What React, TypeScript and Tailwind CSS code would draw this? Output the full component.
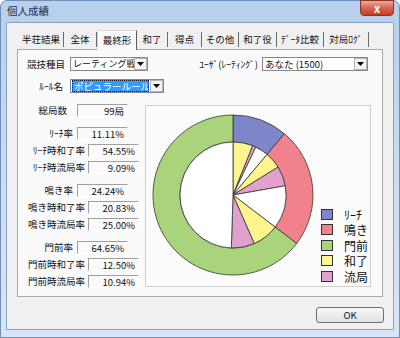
import React from "react";

const FONT = "font-['Noto_Sans_CJK_JP','Noto_Sans',sans-serif]";

const C = {
  blue: "#7d86c8",
  red: "#f1828c",
  green: "#a9d47b",
  yellow: "#fff58e",
  pink: "#e0a2cc",
};

function pt(cx: number, cy: number, r: number, a: number) {
  const t = (a * Math.PI) / 180;
  return [cx + r * Math.sin(t), cy - r * Math.cos(t)];
}

function sector(cx: number, cy: number, r0: number, r1: number, a0: number, a1: number) {
  const large = a1 - a0 > 180 ? 1 : 0;
  const [x1, y1] = pt(cx, cy, r1, a0);
  const [x2, y2] = pt(cx, cy, r1, a1);
  if (r0 === 0) {
    return `M${cx} ${cy} L${x1} ${y1} A${r1} ${r1} 0 ${large} 1 ${x2} ${y2} Z`;
  }
  const [x3, y3] = pt(cx, cy, r0, a1);
  const [x4, y4] = pt(cx, cy, r0, a0);
  return `M${x1} ${y1} A${r1} ${r1} 0 ${large} 1 ${x2} ${y2} L${x3} ${y3} A${r0} ${r0} 0 ${large} 0 ${x4} ${y4} Z`;
}

// outer share, 和了 ratio, 流局 ratio
const groups = [
  { color: C.blue, share: 11.11, win: 54.55, draw: 9.09 },
  { color: C.red, share: 24.24, win: 20.83, draw: 25.0 },
  { color: C.green, share: 64.65, win: 12.5, draw: 10.94 },
];

function Donut() {
  const cx = 87;
  const cy = 89;
  const outer: { d: string; fill: string }[] = [];
  const inner: { d: string; fill: string }[] = [];
  let a = 0;
  groups.forEach((g, i) => {
    const span = i === groups.length - 1 ? 360 - a : g.share * 3.6;
    const end = a + span;
    outer.push({ d: sector(cx, cy, 53, 80, a, end), fill: g.color });
    const w = (span * g.win) / 100;
    const dr = (span * g.draw) / 100;
    inner.push({ d: sector(cx, cy, 0, 53, a, a + w), fill: C.yellow });
    inner.push({ d: sector(cx, cy, 0, 53, a + w, a + w + dr), fill: C.pink });
    inner.push({ d: sector(cx, cy, 0, 53, a + w + dr, end), fill: "#ffffff" });
    a = end;
  });
  return (
    <svg width="168" height="180" viewBox="0 0 168 180" className="shrink-0">
      {outer.map((s, i) => (
        <path key={"o" + i} d={s.d} fill={s.fill} stroke="#333" strokeWidth={0.8} />
      ))}
      {inner.map((s, i) => (
        <path key={"i" + i} d={s.d} fill={s.fill} stroke="#333" strokeWidth={0.8} />
      ))}
    </svg>
  );
}

const legend = [
  { label: "ﾘｰﾁ", color: C.blue },
  { label: "鳴き", color: C.red },
  { label: "門前", color: C.green },
  { label: "和了", color: C.yellow },
  { label: "流局", color: C.pink },
];

function Arrow() {
  return (
    <svg width="7" height="4" viewBox="0 0 7 4">
      <path d="M0 0h7L3.5 4z" fill="#000" />
    </svg>
  );
}

const tabs = [
  { label: "半荘結果", w: "w-[45px]" },
  { label: "全体", w: "w-[33px]" },
  { label: "最終形", w: "w-[40px]", active: true },
  { label: "和了", w: "w-[31px]" },
  { label: "得点", w: "w-[34px]" },
  { label: "その他", w: "w-[37px]" },
  { label: "和了役", w: "w-[38px]" },
  { label: "ﾃﾞｰﾀ比較", w: "w-[47px]" },
  { label: "対局ﾛｸﾞ", w: "w-[45px]" },
];

const statGroups = [
  [{ label: "総局数", value: "99局", sub: false, pad: true }],
  [
    { label: "ﾘｰﾁ率", value: "11.11%", sub: false },
    { label: "ﾘｰﾁ時和了率", value: "54.55%", sub: true },
    { label: "ﾘｰﾁ時流局率", value: "9.09%", sub: true },
  ],
  [
    { label: "鳴き率", value: "24.24%", sub: false },
    { label: "鳴き時和了率", value: "20.83%", sub: true },
    { label: "鳴き時流局率", value: "25.00%", sub: true },
  ],
  [
    { label: "門前率", value: "64.65%", sub: false },
    { label: "門前時和了率", value: "12.50%", sub: true },
    { label: "門前時流局率", value: "10.94%", sub: true },
  ],
];

export default function App() {
  return (
    <div className={`w-[400px] h-[338px] flex flex-col rounded-t-[7px] border border-[#6f8fb6] bg-linear-to-b from-[#b7cfec] via-[#cbdcf1] to-[#d8e5f5] text-[9.5px] text-[#111] ${FONT}`}>
      {/* title bar */}
      <div className="h-[21px] flex items-start justify-between pl-[6px] pr-[5px]">
        <span className="h-[19px] flex items-center text-[10.5px] text-[#1b2f4a]">個人成績</span>
        <div className="w-[34px] h-[16px] -mt-[1px] rounded-b-[4px] border border-[#8a3226] bg-linear-to-b from-[#e9a797] via-[#d6654f] to-[#c43d25] flex items-center justify-center text-white text-[11px] font-bold leading-none">
          x
        </div>
      </div>

      {/* client */}
      <div className="flex-1 mx-[5px] mb-[7px] border border-[#8aa3c2] bg-[#f0f0f0] flex flex-col">
        {/* tabs */}
        <div className="mt-[7px] pl-[12px] h-[19px] flex items-end">
          {tabs.map((t) =>
            t.active ? (
              <div
                key={t.label}
                className={`${t.w} h-[20px] -mb-[1px] relative z-10 bg-[#fafafa] border-l border-t border-[#d6d6d6] border-r border-r-[#5a5a5a] flex items-center justify-center pb-[1px]`}
              >
                {t.label}
              </div>
            ) : (
              <div
                key={t.label}
                className={`${t.w} h-[15px] mb-[2px] border-r border-[#6a6a6a] flex items-center justify-center`}
              >
                {t.label}
              </div>
            )
          )}
        </div>

        {/* panel */}
        <div className="mx-[10px] h-[248px] border border-[#a9a9a9] bg-[#fafafa] flex flex-col">
          <div className="mt-[7px] h-[14px] flex items-center">
            <span className="w-[47px] text-right">競技種目</span>
            <div className="ml-[5px] w-[78px] h-[14px] bg-white border border-[#828790] flex items-center">
              <span className="flex-1 pl-[2px] overflow-hidden whitespace-nowrap leading-[12px] text-[9px]">レーティング戦</span>
              <div className="shrink-0 w-[13px] h-[12px] border border-[#b5b5b5] bg-[#f4f4f4] flex items-center justify-center">
                <Arrow />
              </div>
            </div>
            <span className="ml-[44px] w-[66px] text-right whitespace-nowrap">ﾕｰｻﾞ(ﾚｰﾃｨﾝｸﾞ)</span>
            <div className="ml-[4px] w-[106px] h-[14px] bg-white border border-[#828790] flex items-center">
              <span className="flex-1 pl-[2px] whitespace-nowrap leading-[12px]">あなた (1500)</span>
              <div className="shrink-0 w-[13px] h-[12px] border border-[#b5b5b5] bg-[#f4f4f4] flex items-center justify-center">
                <Arrow />
              </div>
            </div>
          </div>

          <div className="mt-[8px] h-[14px] flex items-center">
            <span className="w-[45px] text-right">ﾙｰﾙ名</span>
            <div className="ml-[7px] w-[94px] h-[14px] bg-white border border-[#828790] flex items-center">
              <span className="ml-[1px] w-[77px] h-[12px] bg-[#3399ff] text-white border border-dotted border-[#1a1a1a] pl-[1px] flex items-center leading-[10px] whitespace-nowrap overflow-hidden">
                ポピュラールール
              </span>
              <div className="shrink-0 ml-auto w-[13px] h-[12px] border border-[#b5b5b5] bg-[#f4f4f4] flex items-center justify-center">
                <Arrow />
              </div>
            </div>
          </div>

          <div className="mt-[11px] flex">
            {/* stats */}
            <div className="w-[127px] flex flex-col">
              {statGroups.map((g, gi) => (
                <div key={gi} className={`flex flex-col gap-[4px] ${gi > 0 ? "mt-[10px]" : ""}`}>
                  {g.map((r) => (
                    <div key={r.label} className="h-[13px] flex items-center">
                      <span
                        className={`${r.sub ? "w-[67px] mr-[3px]" : "w-[55px] mr-[4px]"} ${
                          "pad" in r ? "pr-[6px]" : ""
                        } text-right whitespace-nowrap`}
                      >
                        {r.label}
                      </span>
                      <span className="w-[51px] h-[13px] border-t border-l border-[#a0a0a0] border-r border-b border-r-white border-b-white pr-[3px] text-right leading-[12px]">
                        {r.value}
                      </span>
                    </div>
                  ))}
                </div>
              ))}
            </div>

            {/* chart */}
            <div className="mt-[1px] w-[226px] h-[182px] border border-[#d0d0d0] bg-[#fbfbfb] flex items-end">
              <Donut />
              <div className="ml-[7px] pb-[2px] flex flex-col">
                {legend.map((l) => (
                  <div key={l.label} className="h-[15.5px] flex items-center">
                    <span className="shrink-0 w-[12px] h-[11px] border border-[#333]" style={{ backgroundColor: l.color }} />
                    <span className="ml-[11px] text-[12px] leading-[13px] whitespace-nowrap">{l.label}</span>
                  </div>
                ))}
              </div>
            </div>
          </div>
        </div>

        {/* footer */}
        <div className="mt-[10px] mr-[9px] flex justify-end">
          <div className="w-[68px] h-[16px] rounded-[3px] border border-[#707070] bg-linear-to-b from-[#f7f7f7] to-[#e2e2e2] flex items-center justify-center">
            OK
          </div>
        </div>
      </div>
    </div>
  );
}
